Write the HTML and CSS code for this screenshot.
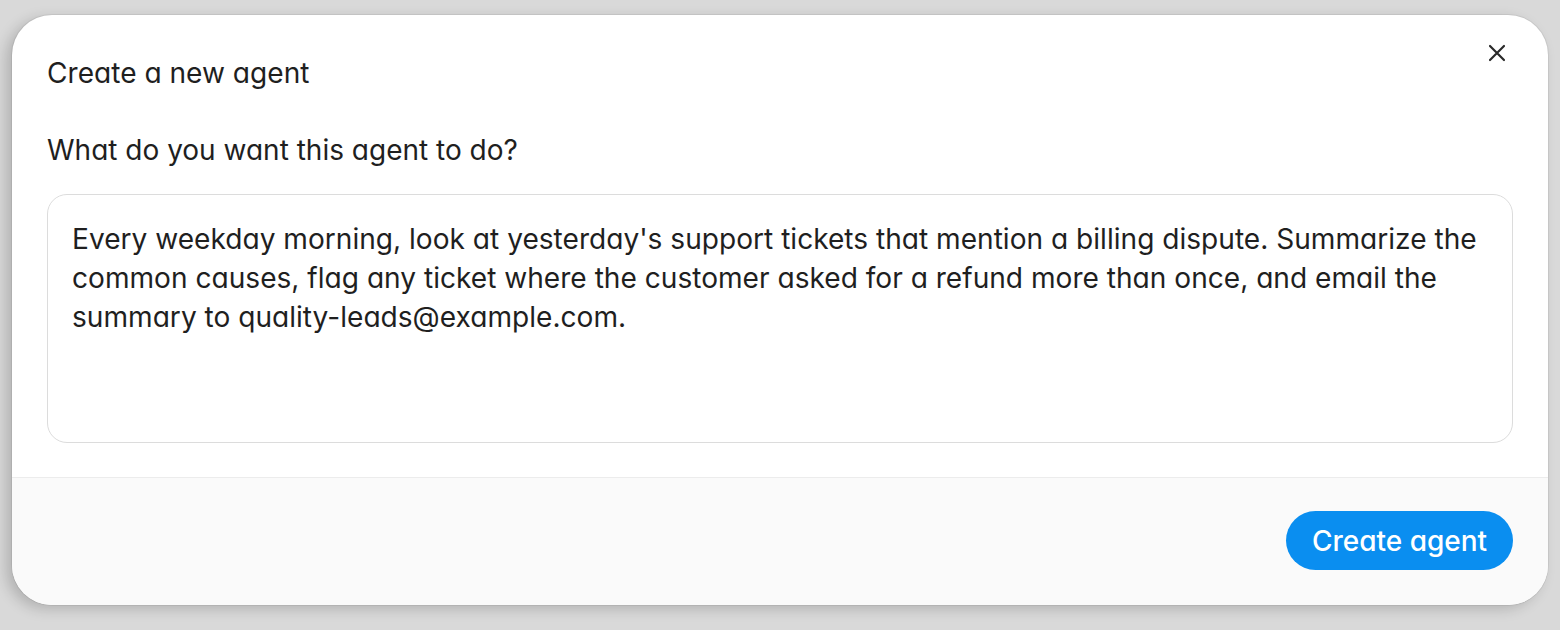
FILE: index.html
```html
<!DOCTYPE html>
<html lang="en">
<head>
<meta charset="utf-8">
<title>Create a new agent</title>
<link rel="stylesheet" href="styles.css">
</head>
<body>
<div class="modal">
  <div class="modal-body">
    <div class="modal-head">
      <h1 class="title">Create a new agent</h1>
      <button class="close" aria-label="Close">
        <svg width="20" height="20" viewBox="0 0 20 20"><path d="M3 3L17 17M17 3L3 17" stroke="#2a2a2a" stroke-width="2.2" stroke-linecap="round"/></svg>
      </button>
    </div>
    <label class="label" for="task">What do you want this agent to do?</label>
    <div class="textarea" id="task">Every weekday morning, look at yesterday's support tickets that mention a billing dispute. Summarize the common causes, flag any ticket where the customer asked for a refund more than once, and email the summary to quality-leads@example.com.</div>
  </div>
  <div class="modal-foot">
    <button class="primary">Create agent</button>
  </div>
</div>
</body>
</html>
```
FILE: styles.css
```css
html, body { margin: 0; padding: 0; }
body {
  background: #d9d9d9;
  font-family: Inter, "Noto Sans", sans-serif;
  font-feature-settings: "cv11" 1;
  color: #1f1f1f;
  padding: 15px 12px 25px 12px;
  height: 630px;
  box-sizing: border-box;
}
.modal {
  width: 1536px;
  height: 590px;
  background: #fff;
  border-radius: 40px;
  box-shadow: -6px 4px 14px rgba(0,0,0,0.18), 0 0 0 1px rgba(0,0,0,0.06);
  overflow: hidden;
  display: flex;
  flex-direction: column;
}
.modal-body {
  padding: 41px 35px 34px 35px;
  border-bottom: 1px solid #ececec;
}
.modal-head {
  display: flex;
  justify-content: space-between;
  align-items: flex-start;
}
.title {
  margin: 0;
  font-size: 28.1px;
  line-height: 34px;
  font-weight: 400;
  color: #1f1f1f;
}
.close {
  border: 0;
  background: none;
  padding: 0;
  margin: -13px 6px 0 0;
  width: 20px;
  height: 20px;
  cursor: pointer;
}
.close svg { display: block; }
.label {
  display: block;
  margin-top: 43px;
  font-size: 28px;
  line-height: 34px;
  color: #1f1f1f;
}
.textarea {
  margin-top: 27px;
  height: 249px;
  box-sizing: border-box;
  border: 1.5px solid #dcdcdc;
  border-radius: 20px;
  padding: 25px 24px;
  font-size: 28.1px;
  line-height: 39px;
  color: #1f1f1f;
}
.modal-foot {
  flex: 1;
  background: #fafafa;
  display: flex;
  justify-content: flex-end;
  align-items: flex-start;
  padding: 33px 35px 0 35px;
}
.primary {
  height: 59px;
  width: 227px;
  border: 0;
  border-radius: 30px;
  background: #0a8ef0;
  color: #fff;
  font-family: inherit;
  font-feature-settings: "cv11" 1;
  font-size: 28px;
  font-weight: 500;
  cursor: pointer;
}
```
